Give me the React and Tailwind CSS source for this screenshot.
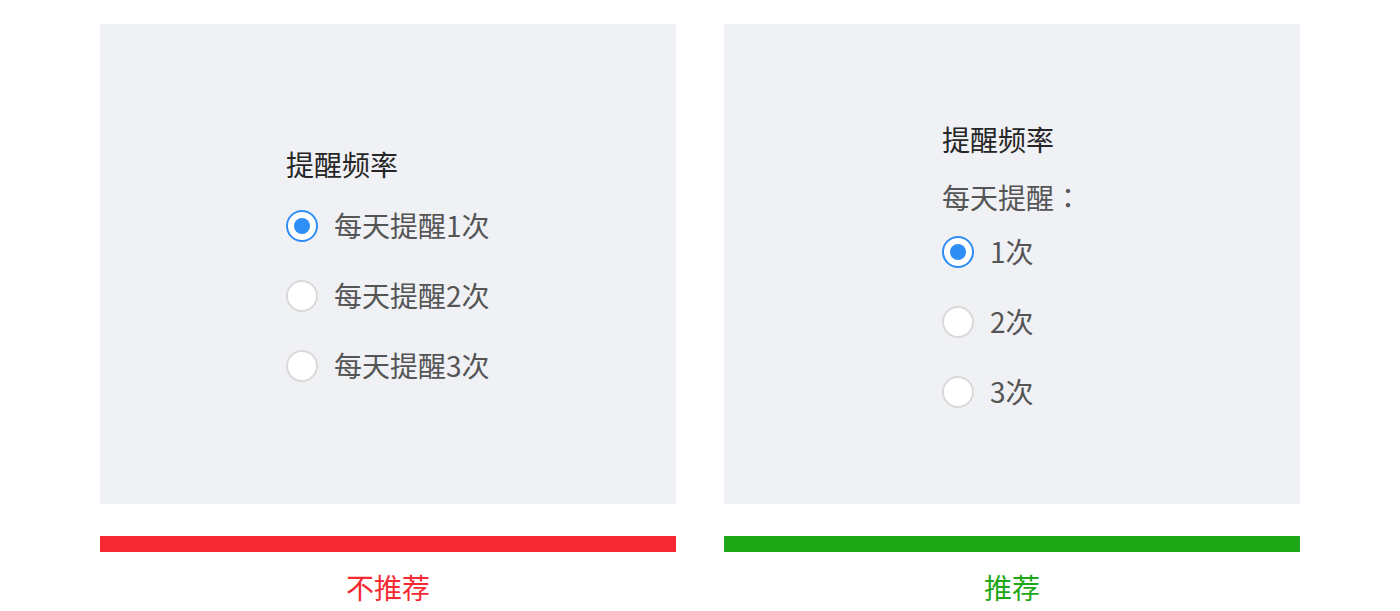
import React from "react";

const font = { fontFamily: '"Noto Sans CJK SC", "Noto Sans", sans-serif' };

// radio circle, selected or not
const Radio = ({ checked }) =>
  checked ? (
    <span className="w-8 h-8 rounded-full border-2 border-[#2e8ef5] bg-white flex items-center justify-center shrink-0">
      <span className="w-4 h-4 rounded-full bg-[#2e8ef5]" />
    </span>
  ) : (
    <span className="w-8 h-8 rounded-full border-2 border-[#d9d9d9] bg-white shrink-0" />
  );

const Option = ({ checked, label }) => (
  <div className="flex items-center h-[40px] gap-4">
    <Radio checked={checked} />
    <span className="text-[28px] leading-[40px] text-[#555555] -translate-y-px">{label}</span>
  </div>
);

const Column = ({ children, barColor, textColor, label }) => (
  <div className="w-[576px] flex flex-col">
    <div className="h-[480px] bg-[#f0f1f5]">{children}</div>
    <div className={`h-4 mt-8 ${barColor}`} />
    <div className={`mt-[15px] text-center text-[28px] leading-[40px] ${textColor}`}>{label}</div>
  </div>
);

const App = () => {
  return (
    <div className="w-[1400px] h-[611px] bg-white overflow-hidden" style={font}>
      <div className="flex gap-12 pl-[100px] pt-6">
        <Column barColor="bg-[#f62a32]" textColor="text-[#f62a32]" label="不推荐">
          <div className="pl-[186px] pt-[120px] flex flex-col">
            <div className="text-[28px] leading-[40px] text-[#262626]">提醒频率</div>
            <div className="mt-[22px] flex flex-col gap-[30px]">
              <Option checked label="每天提醒1次" />
              <Option label="每天提醒2次" />
              <Option label="每天提醒3次" />
            </div>
          </div>
        </Column>

        <Column barColor="bg-[#1ea716]" textColor="text-[#1ea716]" label="推荐">
          <div className="pl-[218px] pt-[95px] flex flex-col">
            <div className="text-[28px] leading-[40px] text-[#262626]">提醒频率</div>
            <div className="mt-[18px] text-[28px] leading-[40px] text-[#555555]">
              每天提醒<span style={{ fontFamily: '"Noto Sans CJK TC", sans-serif' }}>：</span>
            </div>
            <div className="mt-[15px] flex flex-col gap-[30px]">
              <Option checked label="1次" />
              <Option label="2次" />
              <Option label="3次" />
            </div>
          </div>
        </Column>
      </div>
    </div>
  );
};

export default App;
